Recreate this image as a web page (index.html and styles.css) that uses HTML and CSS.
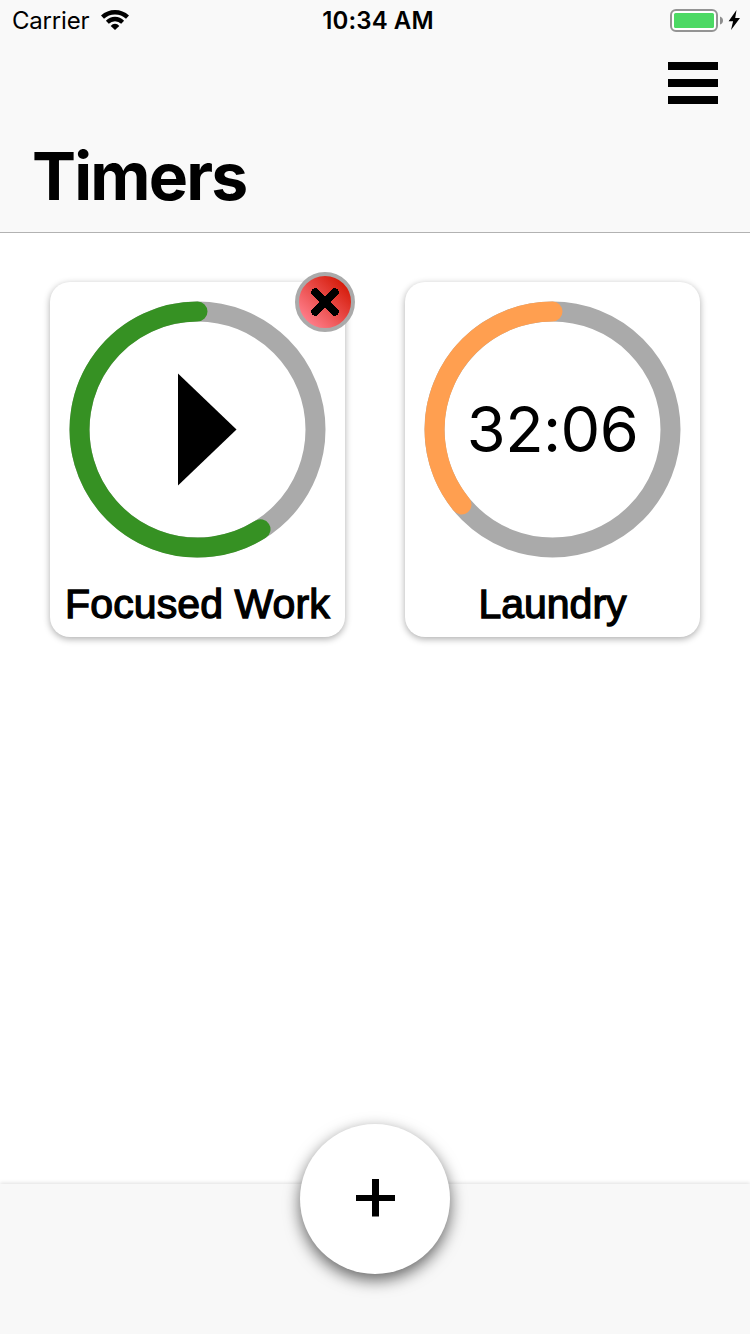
FILE: index.html
```html
<!DOCTYPE html>
<html lang="en">
<head>
<meta charset="utf-8">
<title>Timers</title>
<link rel="stylesheet" href="styles.css">
</head>
<body>
<div class="screen">
  <header class="header">
    <div class="status">
      <div class="status-left">
        <span class="carrier">Carrier</span>
        <svg class="wifi" width="28" height="20" viewBox="0 0 28 20">
          <path d="M0 5.500Q6 0 14 0T28 5.500L25 8.800Q20.500 4.500 14 4.500T3 8.800Z"/>
          <path d="M4.900 10.800Q8.800 6.800 14 6.800T23.100 10.800L20.200 13.800Q17.600 11.300 14 11.300T7.800 13.800Z"/>
          <path d="M9.700 15.900Q11.500 13.800 14 13.800T18.300 15.900L14 20Z"/>
        </svg>
      </div>
      <span class="clock">10:34 AM</span>
      <div class="status-right">
        <svg width="54" height="24" viewBox="0 0 54 24">
          <rect x="1" y="1" width="46" height="21" rx="5" fill="#fff" stroke="#949494" stroke-width="2"/>
          <rect x="4" y="4" width="40" height="15" rx="1.500" fill="#4cd964"/>
          <path d="M50 7.500Q53 8.500 53 11.500T50 15.500Z" fill="#8e8e8e"/>
        </svg>
        <svg class="bolt" width="12" height="20" viewBox="0 0 12 20"><path d="M8.500 0L.6 11.200H5.100L3 20L12 8H7.200Z"/></svg>
      </div>
    </div>
    <div class="nav">
      <div class="menu"><i></i><i></i><i></i></div>
    </div>
    <h1 class="title">Timers</h1>
  </header>

  <main class="timers">
    <section class="card">
      <svg class="ring" width="257" height="257" viewBox="-128.500 -128.500 257 257">
        <circle class="track" r="118"/>
        <path class="progress green" d="M0 -118A118 118 0 1 0 63 99.800"/>
        <path d="M-19.500 -56V56L39 0Z"/>
      </svg>
      <div class="label label-work">Focused Work</div>
      <svg class="remove" width="60" height="60" viewBox="0 0 60 60">
        <defs><linearGradient id="red" x1="0.150" y1="0.850" x2="0.850" y2="0.150"><stop offset="0" stop-color="#ff7f8c"/><stop offset="1" stop-color="#d51a08"/></linearGradient></defs>
        <circle cx="30" cy="30" r="28" fill="url(#red)" stroke="#aaa" stroke-width="4"/>
        <path d="M20.300 20.300L39.700 39.700M39.700 20.300L20.300 39.700" stroke="#000" stroke-width="8.200" stroke-linecap="round" shape-rendering="crispEdges"/>
      </svg>
    </section>
    <section class="card">
      <div class="dial">
        <svg class="ring" width="257" height="257" viewBox="-128.500 -128.500 257 257">
          <circle class="track" r="118"/>
          <path class="progress orange" d="M0 -118A118 118 0 0 0 -91 75"/>
        </svg>
        <span class="time">32:06</span>
      </div>
      <div class="label label-laundry">Laundry</div>
    </section>
  </main>

  <footer class="footer">
    <div class="add">
      <svg width="40" height="38" viewBox="0 0 40 38"><path d="M0 16h39v6H0zM16 0h7v37.500h-7z"/></svg>
    </div>
  </footer>
</div>
</body>
</html>
```
FILE: styles.css
```css
* { box-sizing: border-box; }
body { margin: 0; background: #fff; color: #000; font-family: Inter, "Liberation Sans", sans-serif; }
svg { display: block; }
.screen { width: 750px; height: 1334px; display: flex; flex-direction: column; overflow: hidden; }

.header { height: 233px; background: #f9f9f9; border-bottom: 1px solid #b2b2b2; }
.status { height: 42px; display: grid; grid-template-columns: 1fr auto 1fr; align-items: center; padding: 0 10px 0 12px; font-size: 24px; line-height: 42px; white-space: nowrap; }
.status-left { display: flex; gap: 12px; align-items: center; }
.wifi { margin-top: -2px; }
.carrier { width: 77px; letter-spacing: -.2px; }
.clock { font-weight: 600; margin-left: 4px; letter-spacing: .1px; }
.status-right { display: flex; justify-content: flex-end; align-items: center; gap: 4px; }
.bolt { margin-top: -2px; }
.nav { height: 94px; display: flex; justify-content: flex-end; padding: 20px 32px 0 0; }
.menu { width: 50px; display: flex; flex-direction: column; gap: 9px; }
.menu i { height: 8px; background: #000; }
.title { margin: 0 0 0 32px; font-size: 66px; line-height: 80px; font-weight: 700; letter-spacing: -1.8px; white-space: nowrap; }

.timers { flex: 1; display: flex; gap: 60px; align-items: flex-start; padding: 49px 50px 0; }
.card { position: relative; width: 295px; height: 355px; padding-top: 19px; border-radius: 20px; background: #fff; box-shadow: 0 2px 7px rgba(0, 0, 0, .33); display: flex; flex-direction: column; align-items: center; }
.dial { display: grid; place-items: center; }
.dial > * { grid-area: 1 / 1; }
.track { fill: none; stroke: #aaa; stroke-width: 20; }
.progress { fill: none; stroke-width: 20; stroke-linecap: round; }
.green { stroke: #369123; }
.orange { stroke: #ff9f50; }
.time { font-size: 63px; line-height: 80px; letter-spacing: -.6px; padding-bottom: 2px; }
.label { margin-top: 26px; font-family: "Liberation Sans", sans-serif; font-size: 41px; line-height: 40px; white-space: nowrap; -webkit-text-stroke: 1.3px #000; }
.label-work { letter-spacing: .1px; }
.remove { position: absolute; top: -10px; right: -10px; }

.footer { height: 150px; background: #f8f8f8; display: flex; justify-content: center; box-shadow: 0 -1px 4px rgba(0, 0, 0, .13); }
.add { width: 150px; height: 150px; margin-top: -60px; padding: 0 0 2px 2px; border-radius: 50%; background: #fff; box-shadow: 0 6px 16px rgba(0, 0, 0, .6); display: flex; align-items: center; justify-content: center; }
```
